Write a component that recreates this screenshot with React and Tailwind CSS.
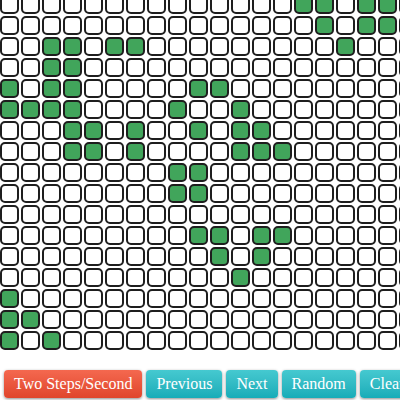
import React from "react";

const ROWS = 17;
const COLS = 20;

// live cells per row (column indexes)
const alive = [
  [14, 15, 17, 18],
  [15, 17, 18],
  [2, 3, 5, 6, 16],
  [2, 3],
  [0, 2, 3, 9, 10],
  [0, 1, 2, 3, 8, 11],
  [3, 4, 6, 9, 11, 12],
  [3, 4, 6, 11, 12, 13],
  [8, 9],
  [8, 9],
  [],
  [9, 10, 12, 13],
  [10, 12],
  [11],
  [0],
  [0, 1],
  [0, 2],
];

const Cell = ({ on }) => (
  <div
    className={`w-[19px] h-[19px] shrink-0 rounded-[5px] border-2 border-[#1e1e1e] ${
      on ? "bg-[#41a55b]" : "bg-white"
    }`}
  />
);

const Button = ({ children, red }) => (
  <button
    className={`h-[28px] px-[10px] shrink-0 flex items-center rounded-[4px] text-white text-[16px] shadow-[0_1px_3px_rgba(0,0,0,0.45)] bg-gradient-to-b ${
      red ? "from-[#f4684f] to-[#e0452b]" : "from-[#45c9d0] to-[#16acb8]"
    }`}
    style={{ fontFamily: '"Liberation Serif", "Times New Roman", serif' }}
  >
    {children}
  </button>
);

export default function App() {
  return (
    <div className="w-[400px] h-[400px] overflow-hidden bg-white">
      <div className="-mt-[5px] flex flex-col gap-[2px]">
        {Array.from({ length: ROWS }).map((_, r) => (
          <div key={r} className="flex gap-[2px]">
            {Array.from({ length: COLS }).map((_, c) => (
              <Cell key={c} on={alive[r].includes(c)} />
            ))}
          </div>
        ))}
      </div>
      <div className="mt-[20px] pl-[4px] flex gap-[4px] whitespace-nowrap">
        <Button red>Two Steps/Second</Button>
        <Button>Previous</Button>
        <Button>Next</Button>
        <Button>Random</Button>
        <Button>Clear</Button>
      </div>
    </div>
  );
}
